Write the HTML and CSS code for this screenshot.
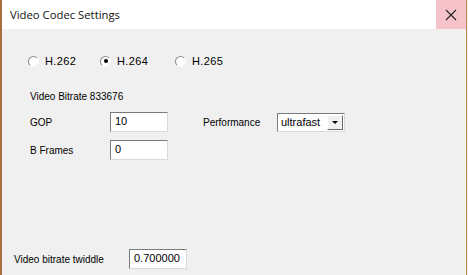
FILE: index.html
```html
<!DOCTYPE html>
<html>
<head>
    <meta charset="utf-8"/>
    <title>Video Codec Settings</title>
    <link rel="stylesheet" href="styles.css">
</head>
<body>

<div class="window">
    <div class="titlebar">
        <span class="title">Video Codec Settings</span>
        <span class="close">
            <svg width="12" height="12" viewBox="0 0 12 12">
                <path d="M1 1 L11 11 M11 1 L1 11" stroke="#222" stroke-width="1.1" fill="none"/>
            </svg>
        </span>
    </div>
    <div class="content">
        <div class="codecs">
            <label class="codec"><span class="radio"></span>H.262</label>
            <label class="codec"><span class="radio checked"></span>H.264</label>
            <label class="codec"><span class="radio"></span>H.265</label>
        </div>
        <div class="bitrate">Video Bitrate 833676</div>
        <div class="fields">
            <span class="lbl">GOP</span>
            <span class="edit">10</span>
            <span class="lbl perf">Performance</span>
            <span class="combo"><span class="combo-text">ultrafast</span><span class="combo-btn"></span></span>
            <span class="lbl">B Frames</span>
            <span class="edit">0</span>
        </div>
        <div class="twiddle">
            <span class="lbl">Video bitrate twiddle</span>
            <span class="edit">0.700000</span>
        </div>
    </div>
</div>

</body>
</html>
```

FILE: styles.css
```css
body {
    margin: 0;
    background: #f0f0f0;
    font-family: 'Liberation Sans', Arial, sans-serif;
    font-size: 10px;
    color: #000;
}

.window {
    width: 464px;
    height: 275px;
    border-left: 2px solid #a4703c;
    border-right: 1px solid #c08a4a;
    display: flex;
    flex-direction: column;
    background: #f0f0f0;
}

.titlebar {
    height: 29px;
    background: #fff;
    display: flex;
    align-items: center;
}

.title {
    flex: 1;
    padding-left: 8px;
    font-family: 'Open Sans', 'Noto Sans', sans-serif;
    font-size: 11.3px;
    color: #111;
}

.close {
    width: 30px;
    height: 29px;
    background: #f5c3c9;
    display: flex;
    align-items: center;
    justify-content: center;
}

.content {
    flex: 1;
    display: flex;
    flex-direction: column;
    padding: 0 0 6px 26px;
}

.codecs {
    display: flex;
    margin-top: 26px;
    height: 12px;
    align-items: center;
    font-size: 11px;
}

.codec {
    display: flex;
    align-items: center;
    width: 72px;
    letter-spacing: 0.4px;
}

.codec:nth-child(2) {
    width: 75px;
}

.radio {
    width: 9px;
    height: 9px;
    border-radius: 50%;
    border: 1px solid;
    border-color: #8a8a8a #f8f8f8 #f8f8f8 #8a8a8a;
    background: #fff;
    margin-right: 6px;
    position: relative;
}

.radio.checked::after {
    content: '';
    position: absolute;
    left: 2.5px;
    top: 2.5px;
    width: 4px;
    height: 4px;
    border-radius: 50%;
    background: #000;
}

.bitrate {
    margin: 24px 0 0 2px;
}

.fields {
    display: grid;
    grid-template-columns: 80px 58px 109px 68px;
    row-gap: 8px;
    align-items: center;
    margin: 10px 0 0 2px;
}

.perf {
    padding-left: 35px;
}

.edit {
    display: block;
    height: 18px;
    line-height: 17px;
    padding-left: 4px;
    background: #fff;
    border: 1px solid;
    border-color: #7a7a7a #dadada #dadada #7a7a7a;
    font-size: 11px;
}

.fields .edit {
    width: 52px;
}

.combo {
    display: flex;
    height: 17px;
    background: #fff;
    border: 1px solid;
    border-color: #7a7a7a #dadada #dadada #7a7a7a;
    width: 66px;
    align-items: center;
}

.combo-text {
    flex: 1;
    padding-left: 3px;
    font-size: 11px;
}

.combo-btn {
    width: 16px;
    height: 15px;
    margin-right: 1px;
    background: #f0f0f0;
    border: 1px solid;
    border-color: #fff #6a6a6a #6a6a6a #fff;
    box-sizing: border-box;
    display: flex;
    align-items: center;
    justify-content: center;
}

.combo-btn::after {
    content: '';
    border-left: 3px solid transparent;
    border-right: 3px solid transparent;
    border-top: 3px solid #000;
}

.twiddle {
    margin-top: auto;
    margin-left: -14px;
    display: flex;
    align-items: center;
}

.twiddle .lbl {
    width: 115px;
}

.twiddle .edit {
    width: 52px;
}
```
